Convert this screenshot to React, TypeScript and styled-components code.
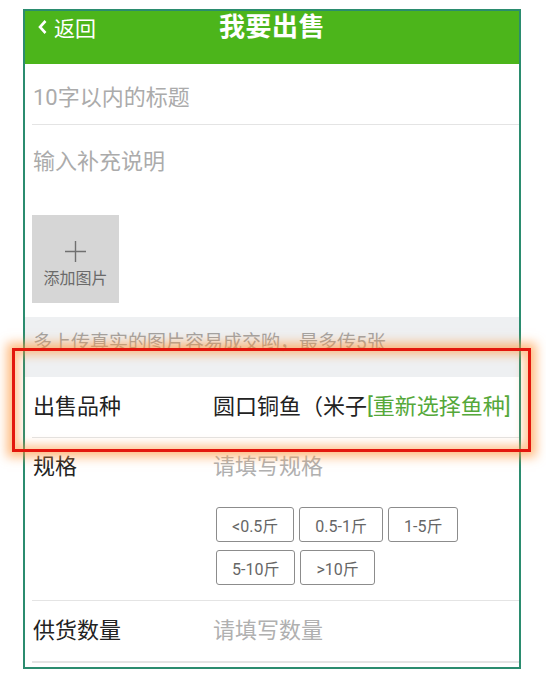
import React from 'react';
import styled, { createGlobalStyle } from 'styled-components';

const GlobalStyle = createGlobalStyle`
  html, body {
    margin: 0;
    padding: 0;
    background: #ffffff;
  }
  body {
    font-family: Roboto, "Noto Sans CJK SC", "Noto Sans", sans-serif;
  }
`;

const Page = styled.div`
  position: relative;
  width: 546px;
  height: 684px;
  padding: 9px 0 0 23px;
  box-sizing: border-box;
`;

const Frame = styled.div`
  width: 498px;
  border: 2px solid #2b8c6f;
  box-sizing: border-box;
  background: #ffffff;
`;

const Header = styled.div`
  height: 53px;
  background: #4cb51b;
  display: grid;
  grid-template-columns: 1fr auto 1fr;
  align-items: start;
  color: #ffffff;
`;

const Back = styled.div`
  display: flex;
  align-items: center;
  gap: 7px;
  padding-left: 12px;
  height: 32px;
  font-size: 21px;
`;

const Title = styled.div`
  font-size: 26px;
  font-weight: 700;
  line-height: 32px;
  letter-spacing: 0.5px;
`;

const Divider = styled.div<{ $thick?: boolean }>`
  height: ${p => (p.$thick ? 2 : 1)}px;
  background: #e4e4e4;
  margin-left: 7px;
`;

const TitleInput = styled.div`
  height: 60px;
  padding: 19px 0 0 8px;
  box-sizing: border-box;
  font-size: 22px;
  line-height: 30px;
  color: #ababab;
`;

const DescInput = styled.div`
  height: 80px;
  padding: 22px 0 0 8px;
  box-sizing: border-box;
  font-size: 22px;
  line-height: 30px;
  color: #ababab;
`;

const ImageSection = styled.div`
  padding: 10px 0 14px 7px;
`;

const AddImage = styled.div`
  width: 87px;
  height: 88px;
  padding-top: 26px;
  box-sizing: border-box;
  background: #d6d6d6;
  display: flex;
  flex-direction: column;
  align-items: center;
  gap: 7px;
  color: #6a6a6a;
  font-size: 16px;
  line-height: 20px;
`;

const Tip = styled.div`
  height: 60px;
  background: #eef0f2;
  padding: 13px 0 0 8px;
  box-sizing: border-box;
  font-size: 19px;
  line-height: 26px;
  color: #a2a2a2;
`;

const Row = styled.div<{ $top?: boolean }>`
  display: flex;
  align-items: ${p => (p.$top ? 'flex-start' : 'center')};
  padding-left: 8px;
  min-height: 60px;
  box-sizing: border-box;
  padding-top: ${p => (p.$top ? 14 : 0)}px;
  padding-bottom: ${p => (p.$top ? 15 : 0)}px;
`;

const Label = styled.div`
  width: 180px;
  flex-shrink: 0;
  font-size: 22px;
  line-height: 30px;
  color: #222222;
`;

const Value = styled.div`
  flex: 1;
  font-size: 22px;
  line-height: 30px;
  color: #222222;
  white-space: nowrap;
  overflow: hidden;
`;

const Placeholder = styled.div`
  font-size: 22px;
  line-height: 30px;
  color: #b0b0b0;
`;

const Link = styled.span`
  color: #55a83a;
`;

const SpecColumn = styled.div`
  flex: 1;
  display: flex;
  flex-direction: column;
`;

const Options = styled.div`
  display: flex;
  flex-wrap: wrap;
  gap: 8px 5px;
  margin: 25px 0 0 3px;
`;

const Option = styled.div`
  height: 35px;
  padding: 0 15px;
  border: 1px solid #8c8c8c;
  border-radius: 3px;
  box-sizing: border-box;
  display: flex;
  align-items: center;
  font-size: 16px;
  color: #666666;
`;

const Footer = styled.div`
  height: 4px;
`;

const Highlight = styled.div`
  position: absolute;
  left: 12px;
  top: 348px;
  width: 519px;
  height: 104px;
  box-sizing: border-box;
  border: 3px solid #e3170d;
  box-shadow: 0 0 10px 5px rgba(255, 150, 60, 0.65), inset 0 0 10px 4px rgba(255, 150, 60, 0.55);
  pointer-events: none;
`;

const specs = ['<0.5斤', '0.5-1斤', '1-5斤', '5-10斤', '>10斤'];

export default function App() {
  return (
    <>
      <GlobalStyle />
      <Page>
        <Frame>
          <Header>
            <Back>
              <svg width="10" height="16" viewBox="0 0 10 16">
                <polyline points="8.5,2 3,8 8.5,14" fill="none" stroke="#fff" strokeWidth="2.6" />
              </svg>
              返回
            </Back>
            <Title>我要出售</Title>
            <div />
          </Header>

          <TitleInput>10字以内的标题</TitleInput>
          <Divider />
          <DescInput>输入补充说明</DescInput>
          <ImageSection>
            <AddImage>
              <svg width="21" height="21" viewBox="0 0 21 21">
                <path d="M10.5 0V21M0 10.5H21" stroke="#707070" strokeWidth="1.4" />
              </svg>
              添加图片
            </AddImage>
          </ImageSection>

          <Tip>多上传真实的图片容易成交哟，最多传5张</Tip>

          <Row>
            <Label>出售品种</Label>
            <Value>
              圆口铜鱼（米子<Link>[重新选择鱼种]</Link>
            </Value>
          </Row>
          <Divider />

          <Row $top>
            <Label>规格</Label>
            <SpecColumn>
              <Placeholder>请填写规格</Placeholder>
              <Options>
                {specs.map(s => (
                  <Option key={s}>{s}</Option>
                ))}
              </Options>
            </SpecColumn>
          </Row>
          <Divider />

          <Row>
            <Label>供货数量</Label>
            <Placeholder>请填写数量</Placeholder>
          </Row>
          <Divider $thick />
          <Footer />
        </Frame>
        <Highlight />
      </Page>
    </>
  );
}
